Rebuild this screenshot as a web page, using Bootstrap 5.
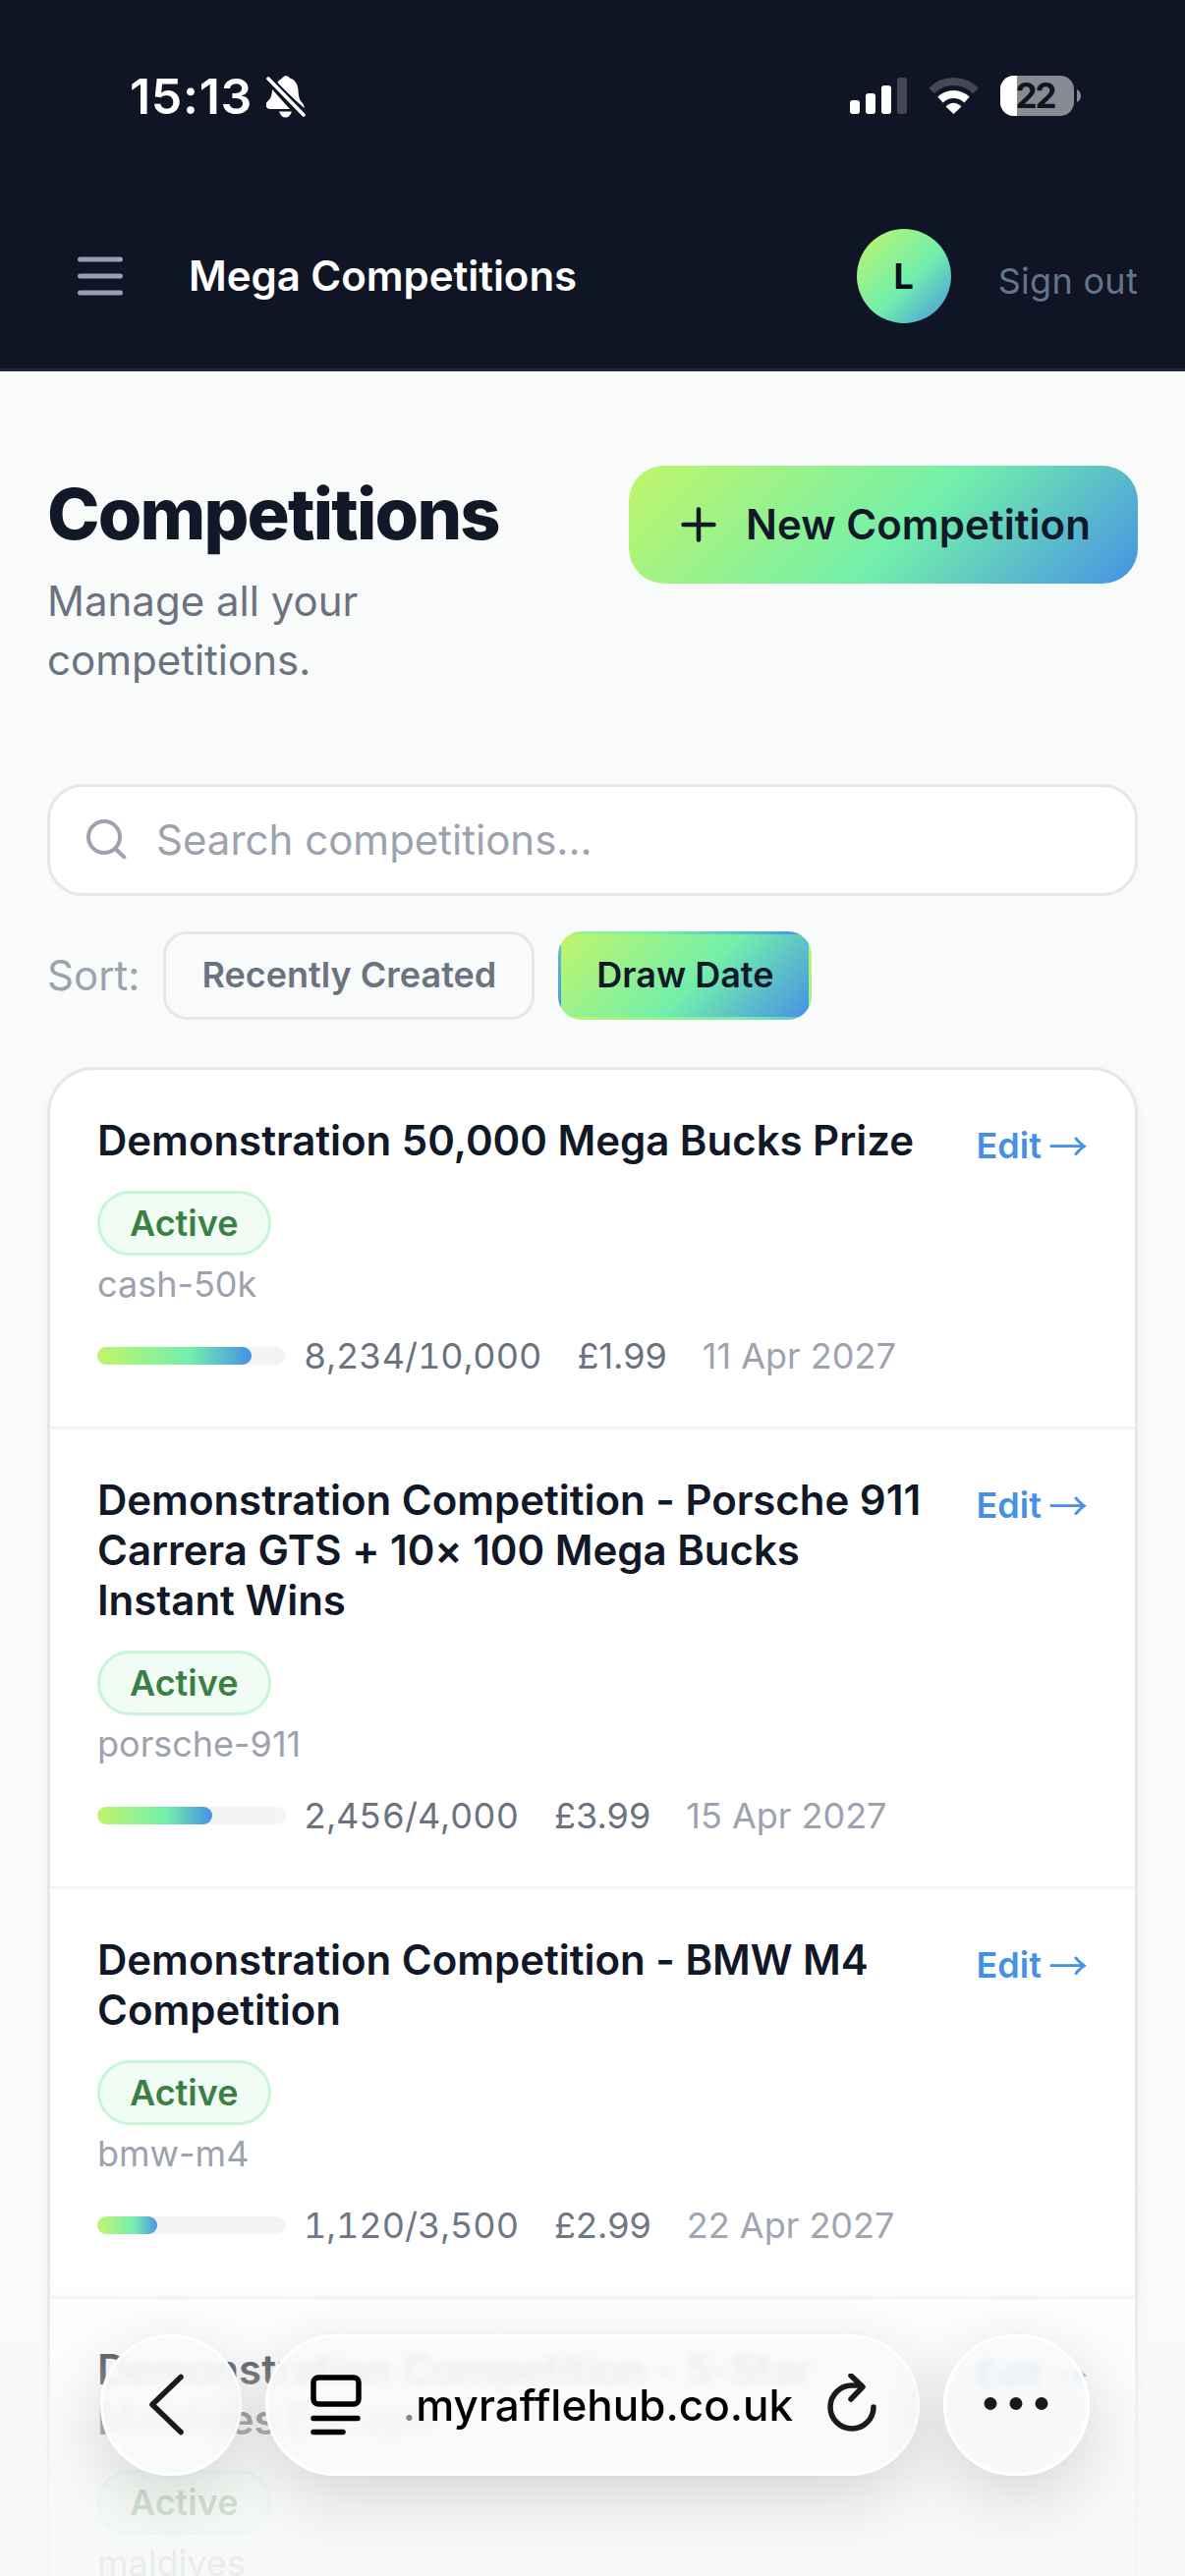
<!DOCTYPE html>
<html lang="en">
<head>
<meta charset="utf-8">
<meta name="viewport" content="width=device-width, initial-scale=1">
<title>Mega Competitions</title>
<link rel="stylesheet" href="https://cdn.jsdelivr.net/npm/bootstrap@5.3.0/dist/css/bootstrap.min.css">
<style>
:root{--brand:linear-gradient(135deg,#c1f56a 0%,#72efab 55%,#4691e5 100%);--ink:#111827;--soft:#6b7280;--faint:#9ca3af}
html,body{height:2622px;overflow:hidden}
body{background:#f9fbfa;color:var(--ink);font-family:Inter,"Liberation Sans",sans-serif;font-size:42px;line-height:60px}
.topbar{background:#0f1524;height:378px;border-bottom:3px solid #22263a}
.status{height:195px;padding:0 106px 0 132px}
.clock{font-size:50px;font-weight:600;letter-spacing:.7px}
.bell{margin-left:14px}
.wifi{margin:0 22px}
.appbar{height:180px;padding:0 48px 8px 72px}
.brandname{font-weight:600;margin-left:60px;letter-spacing:-.05px}
.avatar{width:96px;height:96px;background:var(--brand);color:#0a0f1e;font-size:36px;font-weight:700}
.signout{font-size:36px;color:#64748b;margin-left:48px;padding-top:10px;letter-spacing:.3px}
.page{padding:96px 48px 0}
.page-title{font-size:72px;line-height:96px;font-weight:800;letter-spacing:-1.8px;margin:0 0 12px;padding-top:1px;height:96px}
.sub{color:var(--soft);width:400px}
.btn-brand{background:var(--brand);border:0;border-radius:36px;height:120px;padding:0 48px 1px 47px;font-size:42px;font-weight:600;color:var(--ink);gap:24px;letter-spacing:.05px}
.finder{height:114px;border:3px solid #e5e7eb;border-radius:36px;background:#fff;padding:0 36px;margin-top:96px}
.finder input{border:0;padding:0;font-size:42px;line-height:60px;background:transparent;margin-left:28px}
.finder input::placeholder{color:var(--faint);opacity:1}
.sorts{margin-top:36px;gap:24px}
.sort-label{color:var(--faint)}
.chip{height:90px;padding:0 36px 2px;border:3px solid #e5e7eb;border-radius:24px;font-size:36px;line-height:48px;font-weight:600;color:var(--soft)}
.chip-on{border-color:transparent;background:var(--brand);color:var(--ink)}
.comps{margin-top:48px;border:3px solid #e5e7eb;border-radius:48px;background:#fff;box-shadow:0 3px 9px rgba(0,0,0,.05);overflow:hidden;height:1700px}
.comp{padding:48px;border-bottom:3px solid #f3f4f6}
.comp-name{font-size:42px;line-height:51px;font-weight:600;margin:-2px 0 26px;letter-spacing:-.03px}
.pill{height:66px;padding:0 30px 1px;border:3px solid #c6f6d5;background:#f1fcf4;border-radius:33px;color:#3a8044;font-size:36px;line-height:48px;font-weight:600;margin:0 0 5px;width:max-content}
.slug{font-size:36px;line-height:48px;color:var(--faint)}
.meta{font-size:36px;line-height:46px;height:48px;margin-top:25px;color:var(--soft)}
.sold{font-variant-numeric:tabular-nums}
.meter{width:192px;height:18px;border-radius:9px;background:#f3f4f6;margin-right:18px}
.meter>div{height:18px;border-radius:9px;background:linear-gradient(90deg,#c1f56a 0%,#72efab 60%,#4691e5 100%)}
.price,.when{margin-left:36px}
.when{color:var(--faint)}
.edit{font-size:36px;line-height:48px;height:48px;font-weight:600;color:#4691e5;text-decoration:none;margin-top:5px}
.arr{display:inline-block;font-family:"Noto Sans CJK JP",sans-serif;font-weight:400;font-size:40px;line-height:1;margin-left:-2px;transform:translateY(3px)}
.fade-out{height:420px;background:linear-gradient(to bottom,rgba(246,248,247,0) 0,rgba(246,248,247,.06) 100px,rgba(246,248,247,.2) 150px,rgba(246,248,247,.4) 205px,rgba(246,248,247,.68) 265px,rgba(246,248,247,.8) 345px,rgba(246,248,247,.86) 420px);z-index:10}
.browser{height:246px;padding:0 97px 0 102px;z-index:20}
.glass{height:144px;border-radius:72px;border:3px solid #fff;background:rgba(248,249,249,.9);backdrop-filter:blur(4px);box-shadow:0 20px 70px rgba(0,0,0,.15)}
.round-l{width:144px}.round-r{width:149px;background:rgba(248,249,249,.78)}
.address{width:666px;padding:0 38px 0 43px}
.host{font-size:44px;font-weight:500;color:#000;line-height:60px;margin-left:8px}
.host span{opacity:.45}
svg{display:block;flex:none}
</style>
</head>
<body>
<header class="topbar">
  <div class="status d-flex align-items-center justify-content-between text-white">
    <div class="d-flex align-items-center">
      <span class="clock" id="clock">15:13</span>
      <svg class="bell" width="40" height="44" viewBox="0 0 40 44"><path d="M11 9C13 4 16 5 16 3.500Q20-1.500 24 3.500C29 5 32 9 32.500 16C33 24 34 26 37 29Q39 32 38.500 34Z" fill="#fff"/><path d="M6 15L24 35H4Q-.5 35-.5 30Q0 28 3 25.500Q6 22 6 15Z" fill="#fff"/><path d="M13 37.500H26Q24 43.500 19.500 43.500Q15 43.500 13 37.500Z" fill="#fff"/><path d="M2 4L38 41" stroke="#0f1524" stroke-width="8"/><path d="M2 4L38 41" stroke="#fff" stroke-width="3.600" stroke-linecap="round"/></svg>
    </div>
    <div class="d-flex align-items-center">
      <svg width="58" height="42" viewBox="0 0 58 42"><g fill="#fff"><rect y="25" width="10" height="14" rx="3"/><rect x="16" y="18" width="10" height="21" rx="3"/><rect x="32" y="10" width="10" height="29" rx="3"/><rect x="48" y="2" width="10" height="37" rx="3" opacity=".22"/></g></svg>
      <svg class="wifi" width="51" height="42" viewBox="0 0 51 42"><g fill="none" stroke="#fff" stroke-width="8"><path d="M3 15.500Q12.500 6 25.500 6T48 15.500" opacity=".22"/><path d="M12 24.500Q18 19 25.500 19T39 24.500"/></g><path d="M17.500 31.500Q25.500 24 33.500 31.500L25.500 39Z" fill="#fff"/></svg>
      <svg width="82" height="42" viewBox="0 0 82 42"><defs><clipPath id="cell"><rect width="75" height="41" rx="14"/></clipPath></defs><g clip-path="url(#cell)"><rect width="75" height="41" fill="#878b92"/><rect width="17" height="41" fill="#fff"/></g><path d="M78 14Q82 16 82 20.500T78 27Z" fill="#878b92"/><text x="15.500" y="33" font-size="35" font-weight="700" fill="#0f1524" textLength="42">22</text></svg>
    </div>
  </div>
  <div class="appbar d-flex align-items-center">
    <svg width="60" height="60" viewBox="0 0 60 60"><path d="M9.500 13H50.500M9.500 30H50.500M9.500 47H50.500" stroke="#94a0b8" stroke-width="5" stroke-linecap="round"/></svg>
    <span class="brandname text-white">Mega Competitions</span>
    <span class="avatar rounded-circle d-flex align-items-center justify-content-center ms-auto">L</span>
    <span class="signout">Sign out</span>
  </div>
</header>
<main class="page">
  <div class="d-flex justify-content-between align-items-start">
    <div>
      <h1 class="page-title">Competitions</h1>
      <div class="sub">Manage all your competitions.</div>
    </div>
    <button class="btn btn-brand d-flex align-items-center"><svg width="48" height="48" viewBox="0 0 48 48"><path d="M24 8.500V39.500M8.500 24H39.500" stroke="#111827" stroke-width="4.500" stroke-linecap="round"/></svg>New Competition</button>
  </div>
  <div class="finder d-flex align-items-center">
    <svg width="44" height="44" viewBox="0 0 44 44"><g fill="none" stroke="#9ca3af" stroke-width="4" stroke-linecap="round"><circle cx="19" cy="19" r="16"/><path d="M30.500 31L39.500 39.500"/></g></svg>
    <input class="form-control shadow-none" placeholder="Search competitions...">
  </div>
  <div class="sorts d-flex align-items-center">
    <span class="sort-label">Sort:</span>
    <span class="chip d-flex align-items-center">Recently Created</span>
    <span class="chip chip-on d-flex align-items-center">Draw Date</span>
  </div>
  <section class="comps">
    <article class="comp d-flex justify-content-between align-items-start">
      <div><h2 class="comp-name">Demonstration 50,000 Mega Bucks Prize</h2>
        <div class="pill d-flex align-items-center">Active</div><div class="slug">cash-50k</div>
        <div class="meta d-flex align-items-center"><div class="meter"><div style="width:82%"></div></div><span class="sold">8,234/10,000</span><span class="price">£1.99</span><span class="when">11 Apr 2027</span></div></div>
      <a class="edit text-nowrap" href="#">Edit <span class="arr">→</span></a>
    </article>
    <article class="comp d-flex justify-content-between align-items-start">
      <div><h2 class="comp-name">Demonstration Competition - Porsche 911<br>Carrera GTS + 10× 100 Mega Bucks<br>Instant Wins</h2>
        <div class="pill d-flex align-items-center">Active</div><div class="slug">porsche-911</div>
        <div class="meta d-flex align-items-center"><div class="meter"><div style="width:61%"></div></div><span class="sold">2,456/4,000</span><span class="price">£3.99</span><span class="when">15 Apr 2027</span></div></div>
      <a class="edit text-nowrap" href="#">Edit <span class="arr">→</span></a>
    </article>
    <article class="comp d-flex justify-content-between align-items-start">
      <div><h2 class="comp-name">Demonstration Competition - BMW M4<br>Competition</h2>
        <div class="pill d-flex align-items-center">Active</div><div class="slug">bmw-m4</div>
        <div class="meta d-flex align-items-center"><div class="meter"><div style="width:32%"></div></div><span class="sold">1,120/3,500</span><span class="price">£2.99</span><span class="when">22 Apr 2027</span></div></div>
      <a class="edit text-nowrap" href="#">Edit <span class="arr">→</span></a>
    </article>
    <article class="comp d-flex justify-content-between align-items-start">
      <div><h2 class="comp-name">Demonstration Competition - 5-Star<br>Maldives Escape</h2>
        <div class="pill d-flex align-items-center">Active</div><div class="slug">maldives</div></div>
      <a class="edit text-nowrap" href="#">Edit <span class="arr">→</span></a>
    </article>
  </section>
</main>
<div class="fade-out fixed-bottom"></div>
<nav class="browser fixed-bottom d-flex justify-content-between align-items-start">
  <div class="glass round-l d-flex align-items-center justify-content-center"><svg width="60" height="72" viewBox="0 0 60 72"><path d="M42 8L13 36L42 64" transform="translate(-2 -.5)" fill="none" stroke="#1a1a1a" stroke-width="5.500" stroke-linecap="round" stroke-linejoin="round"/></svg></div>
  <div class="glass address d-flex align-items-center justify-content-between">
    <svg width="54" height="64" viewBox="0 0 54 64"><g fill="none" stroke="#000" stroke-width="5.500" stroke-linecap="round"><rect x="3" y="4" width="46" height="27" rx="5"/><path d="M3 45.500H48M3 59.500H33"/></g></svg>
    <span class="host"><span>.</span>myrafflehub.co.uk</span>
    <svg width="56" height="64" viewBox="0 0 56 64"><g fill="none" stroke="#1a1a1a" stroke-width="5.500" stroke-linecap="round" stroke-linejoin="round"><path d="M50 34A22 22 0 1 1 28 12H37"/><path d="M27 2L39 13.500L27 26"/></g></svg>
  </div>
  <div class="glass round-r d-flex align-items-center justify-content-center"><svg width="68" height="16" viewBox="0 0 68 16"><g fill="#1a1a1a"><circle cx="7" cy="6.500" r="6.500"/><circle cx="33" cy="6.500" r="6.500"/><circle cx="59" cy="6.500" r="6.500"/></g></svg></div>
</nav>
<script src="https://cdn.jsdelivr.net/npm/bootstrap@5.3.0/dist/js/bootstrap.bundle.min.js"></script>
</body>
</html>
